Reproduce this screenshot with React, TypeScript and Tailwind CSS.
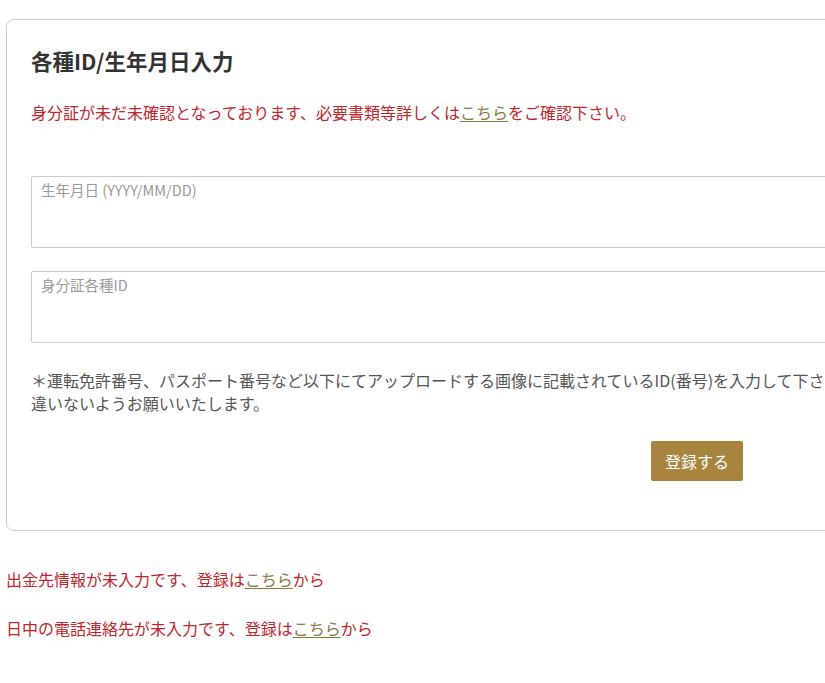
import React from 'react';

const jp = { fontFamily: '"Noto Sans CJK JP", "Noto Sans", sans-serif' };

const Link = ({ children }: { children: React.ReactNode }) => (
  <a href="#" className="text-[#8c7a45] underline underline-offset-2">
    {children}
  </a>
);

const Field = ({ placeholder }: { placeholder: string }) => (
  <textarea
    placeholder={placeholder}
    className="block w-full h-[72px] resize-none border border-[#cccccc] rounded-[2px] px-[9px] pt-[3px] text-[14.5px] leading-[20px] text-[#333] placeholder:text-[#9a9a9a] outline-none"
  />
);

const App = () => {
  return (
    <div className="w-full min-h-[683px] overflow-hidden bg-white" style={jp}>
      <div className="pt-[19px] pl-[6px]">
        <div className="w-[900px] border border-[#cccccc] rounded-[8px] px-[24px] pt-[26px] pb-[49px]">
          <h2 className="text-[21.5px] leading-[30px] font-bold text-[#333]">各種ID/生年月日入力</h2>
          <p className="mt-[24px] text-[16px] leading-[24px] text-[#c0272d]">
            身分証が未だ未確認となっております、必要書類等詳しくは<Link>こちら</Link>をご確認下さい。
          </p>

          <div className="mt-[52px]">
            <Field placeholder="生年月日 (YYYY/MM/DD)" />
          </div>
          <div className="mt-[23px]">
            <Field placeholder="身分証各種ID" />
          </div>

          <p className="mt-[26px] text-[16px] leading-[23px] text-[#555] whitespace-nowrap">
            ＊運転免許番号、パスポート番号など以下にてアップロードする画像に記載されているID(番号)を入力して下さい。間
            <br />
            違いないようお願いいたします。
          </p>

          <button className="mt-[26px] ml-[620px] w-[92px] h-[40px] bg-[#a8843f] rounded-[2px] text-white text-[16px]">
            登録する
          </button>
        </div>

        <p className="mt-[36px] text-[16px] leading-[24px] text-[#c0272d]">
          出金先情報が未入力です、登録は<Link>こちら</Link>から
        </p>
        <p className="mt-[25px] text-[16px] leading-[24px] text-[#c0272d]">
          日中の電話連絡先が未入力です、登録は<Link>こちら</Link>から
        </p>
      </div>
    </div>
  );
};

export default App;
